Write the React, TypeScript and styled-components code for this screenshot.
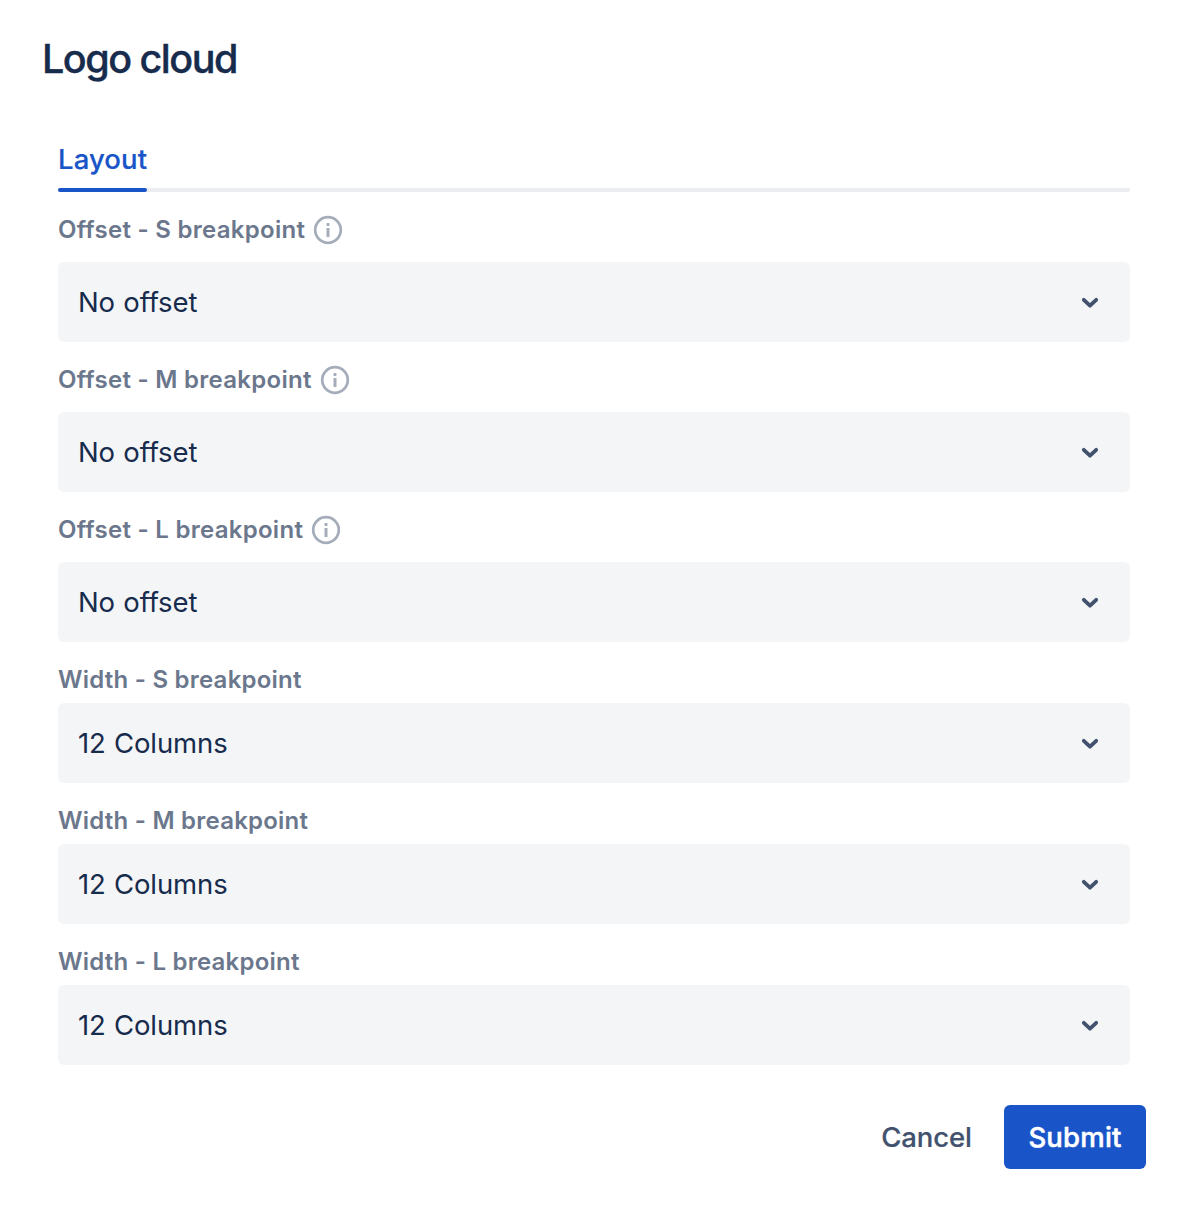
import React from 'react';
import styled, { createGlobalStyle } from 'styled-components';

const GlobalStyle = createGlobalStyle`
  *, *::before, *::after { box-sizing: border-box; }
  body {
    margin: 0;
    background: #fff;
    font-family: Inter, "Liberation Sans", sans-serif;
    font-feature-settings: "calt" 0;
    color: #172b4d;
  }
`;

const Dialog = styled.form`
  height: 1228px;
  padding: 35px 42px 0;
`;

const Title = styled.h1`
  margin: 0;
  height: 48px;
  font-size: 39.5px;
  line-height: 48px;
  font-weight: 500;
  letter-spacing: -1.5px;
  -webkit-text-stroke: 0.4px currentColor;
  white-space: nowrap;
`;

const Content = styled.div`
  padding: 53px 16px 0;
`;

const TabList = styled.div`
  display: flex;
  height: 56px;
  background: linear-gradient(#ebecf0, #ebecf0) bottom / 100% 4px no-repeat;
  border-radius: 2px;
`;

const Tab = styled.div`
  width: 89px;
  height: 56px;
  line-height: 47px;
  font-size: 27.5px;
  font-weight: 500;
  letter-spacing: 0.1px;
  -webkit-text-stroke: 0.2px currentColor;
  color: #1955c8;
  white-space: nowrap;

  &::after {
    content: '';
    display: block;
    height: 4px;
    margin-top: 5px;
    border-radius: 2px;
    background: #1955c8;
  }
`;

const Field = styled.div<{ $hint?: boolean }>`
  display: flex;
  flex-direction: column;
  height: ${(p) => (p.$hint ? 150 : 141)}px;
`;

const Label = styled.label<{ $hint?: boolean }>`
  display: flex;
  align-items: center;
  gap: 8px;
  height: ${(p) => (p.$hint ? 70 : 61)}px;
  padding-top: ${(p) => (p.$hint ? 6 : 14)}px;
  font-size: 24px;
  line-height: 32px;
  font-weight: 600;
  letter-spacing: ${(p) => (p.$hint ? 0.28 : 0.23)}px;
  color: #6b778c;
  white-space: nowrap;
`;

const SelectBox = styled.div`
  display: flex;
  align-items: center;
  justify-content: space-between;
  height: 80px;
  padding: 0 24px 0 20px;
  border-radius: 6px;
  background: #f4f5f7;
  font-size: 27.5px;
  line-height: 40px;
  letter-spacing: -0.1px;
  word-spacing: 0.6px;
  white-space: nowrap;
`;

const Actions = styled.div`
  display: flex;
  justify-content: flex-end;
  gap: 8px;
  padding-top: 40px;
`;

const Button = styled.button<{ $primary?: boolean }>`
  height: 64px;
  width: ${(p) => (p.$primary ? 142 : 139)}px;
  padding: 0;
  border: 0;
  border-radius: 6px;
  background: ${(p) => (p.$primary ? '#1955c8' : 'transparent')};
  color: ${(p) => (p.$primary ? '#fff' : '#42526e')};
  font: 500 27.5px/64px Inter, "Liberation Sans", sans-serif;
  letter-spacing: ${(p) => (p.$primary ? 0.2 : -0.1)}px;
  -webkit-text-stroke: ${(p) => (p.$primary ? 0.5 : 0.2)}px currentColor;
  white-space: nowrap;
`;

const InfoIcon = () => (
  <svg width="30" height="30" viewBox="0 0 30 30" fill="none">
    <circle cx="15" cy="15" r="12.8" stroke="#a5adba" strokeWidth="2.7" />
    <rect x="13.5" y="8" width="3" height="3" rx="0.8" fill="#a5adba" />
    <rect x="13.5" y="12.9" width="3" height="9.1" rx="0.6" fill="#a5adba" />
  </svg>
);

const Chevron = () => (
  <svg width="32" height="32" viewBox="0 0 32 32" fill="none">
    <path d="M9.8 13.8l6.2 5.9 6.2-5.9" stroke="#42526e" strokeWidth="3.8" strokeLinecap="round" strokeLinejoin="round" />
  </svg>
);

const fields = [
  { label: 'Offset - S breakpoint', value: 'No offset', hint: true },
  { label: 'Offset - M breakpoint', value: 'No offset', hint: true },
  { label: 'Offset - L breakpoint', value: 'No offset', hint: true },
  { label: 'Width - S breakpoint', value: '12 Columns', hint: false },
  { label: 'Width - M breakpoint', value: '12 Columns', hint: false },
  { label: 'Width - L breakpoint', value: '12 Columns', hint: false },
];

export default function App() {
  return (
    <>
      <GlobalStyle />
      <Dialog>
        <Title>Logo cloud</Title>
        <Content>
          <TabList><Tab>Layout</Tab></TabList>
          {fields.map((f) => (
            <Field key={f.label} $hint={f.hint}>
              <Label $hint={f.hint}>
                <span>{f.label}</span>
                {f.hint && <InfoIcon />}
              </Label>
              <SelectBox><span>{f.value}</span><Chevron /></SelectBox>
            </Field>
          ))}
        </Content>
        <Actions>
          <Button type="button">Cancel</Button>
          <Button type="button" $primary>Submit</Button>
        </Actions>
      </Dialog>
    </>
  );
}
